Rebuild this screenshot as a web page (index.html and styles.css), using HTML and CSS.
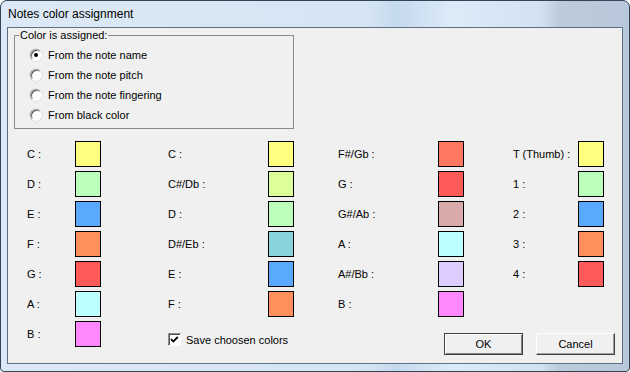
FILE: index.html
```html
<!DOCTYPE html>
<html lang="en">
<head>
    <meta charset="UTF-8">
    <title>Notes color assignment</title>
    <link rel="stylesheet" href="styles.css">
</head>
<body>
    <div class="window">
        <div class="titlebar">Notes color assignment</div>
        <div class="client">
            <fieldset class="group">
                <legend>Color is assigned:</legend>
                <div class="radio-row"><span class="radio"><span class="dot"></span></span>From the note name</div>
                <div class="radio-row"><span class="radio"></span>From the note pitch</div>
                <div class="radio-row"><span class="radio"></span>From the note fingering</div>
                <div class="radio-row"><span class="radio"></span>From black color</div>
            </fieldset>

            <div class="notes">
                <div class="col col1">
                    <div class="note"><span class="lbl">C :</span><span class="swatch yellow"></span></div>
                    <div class="note"><span class="lbl">D :</span><span class="swatch green"></span></div>
                    <div class="note"><span class="lbl">E :</span><span class="swatch blue"></span></div>
                    <div class="note"><span class="lbl">F :</span><span class="swatch orange"></span></div>
                    <div class="note"><span class="lbl">G :</span><span class="swatch red"></span></div>
                    <div class="note"><span class="lbl">A :</span><span class="swatch cyan"></span></div>
                    <div class="note"><span class="lbl">B :</span><span class="swatch pink"></span></div>
                </div>
                <div class="col col2">
                    <div class="note"><span class="lbl">C :</span><span class="swatch yellow"></span></div>
                    <div class="note"><span class="lbl">C#/Db :</span><span class="swatch lime"></span></div>
                    <div class="note"><span class="lbl">D :</span><span class="swatch green"></span></div>
                    <div class="note"><span class="lbl">D#/Eb :</span><span class="swatch teal"></span></div>
                    <div class="note"><span class="lbl">E :</span><span class="swatch blue"></span></div>
                    <div class="note"><span class="lbl">F :</span><span class="swatch orange"></span></div>
                    <div class="check-row">
                        <span class="checkbox">
                            <svg width="11" height="11" viewBox="0 0 11 11"><polyline points="2,5 4.3,7.5 8.8,3" fill="none" stroke="#000" stroke-width="1.8"/></svg>
                        </span>
                        Save choosen colors
                    </div>
                </div>
                <div class="right">
                    <div class="cols34">
                        <div class="col col3">
                            <div class="note"><span class="lbl">F#/Gb :</span><span class="swatch salmon"></span></div>
                            <div class="note"><span class="lbl">G :</span><span class="swatch red"></span></div>
                            <div class="note"><span class="lbl">G#/Ab :</span><span class="swatch rose"></span></div>
                            <div class="note"><span class="lbl">A :</span><span class="swatch cyan"></span></div>
                            <div class="note"><span class="lbl">A#/Bb :</span><span class="swatch lilac"></span></div>
                            <div class="note"><span class="lbl">B :</span><span class="swatch pink"></span></div>
                        </div>
                        <div class="col col4">
                            <div class="note"><span class="lbl">T (Thumb) :</span><span class="swatch yellow"></span></div>
                            <div class="note"><span class="lbl">1 :</span><span class="swatch green"></span></div>
                            <div class="note"><span class="lbl">2 :</span><span class="swatch blue"></span></div>
                            <div class="note"><span class="lbl">3 :</span><span class="swatch orange"></span></div>
                            <div class="note"><span class="lbl">4 :</span><span class="swatch red"></span></div>
                        </div>
                    </div>
                    <div class="buttons">
                        <button class="btn default">OK</button>
                        <button class="btn">Cancel</button>
                    </div>
                </div>
            </div>
        </div>
    </div>
</body>
</html>
```

FILE: styles.css
```css
html, body {
    margin: 0;
    padding: 0;
    background: #ffffff;
}
body {
    font-family: "Liberation Sans", Arial, sans-serif;
    font-size: 11px;
    color: #000;
}
.window {
    width: 630px;
    height: 372px;
    box-sizing: border-box;
    border: 1px solid #2e4656;
    border-radius: 7px 7px 4px 4px;
    padding: 0 6px 7px 6px;
    display: flex;
    flex-direction: column;
    background: linear-gradient(to right, #dce8f5 0%, #d6e5f4 58%, #c6daee 63%, #dcebf8 72%, #d2e2f2 86%, #bccbdc 89%, #b9c8da 100%);
}
.titlebar {
    height: 26px;
    line-height: 27px;
    padding-left: 1px;
    font-size: 12px;
    color: #000;
    white-space: nowrap;
}
.client {
    flex: 1;
    background: #f0f0f0;
    border: 1px solid #5d6e80;
    padding: 1px 7px 0 6px;
}

/* option group */
.group {
    width: 280px;
    height: 100px;
    box-sizing: border-box;
    margin: 0;
    padding: 3px 4px 2px 4px;
    border: 1px solid #8a8a8a;
}
.group legend {
    padding: 0 1px;
    line-height: 13px;
}
.radio-row {
    height: 20px;
    display: flex;
    align-items: center;
    margin-left: 11px;
}
.radio {
    width: 12px;
    height: 12px;
    box-sizing: border-box;
    border-radius: 50%;
    background: #fff;
    border: 1px solid;
    border-color: #a0a0a0 #ffffff #ffffff #a0a0a0;
    box-shadow: inset 1px 1px 0 #606060, 0 0 0 0.5px #c8c8c8;
    margin-right: 6px;
    display: flex;
    align-items: center;
    justify-content: center;
}
.dot {
    width: 4px;
    height: 4px;
    border-radius: 50%;
    background: #000;
}

/* note colors */
.notes {
    display: flex;
    margin-top: 10px;
    padding-left: 13px;
}
.note {
    height: 30px;
    display: flex;
    align-items: center;
}
.lbl {
    white-space: nowrap;
}
.col1 .lbl { width: 48px; }
.col2 { margin-left: 67px; }
.col2 .lbl, .col3 .lbl { width: 100px; }
.col4 { margin-left: 49px; }
.col4 .lbl { width: 65px; }
.right {
    flex: 1;
    margin-left: 44px;
    display: flex;
    flex-direction: column;
}
.cols34 {
    display: flex;
}
.swatch {
    width: 26px;
    height: 26px;
    box-sizing: border-box;
    border: 1px solid #000;
}
.yellow { background: #ffff80; }
.green  { background: #bbffbb; }
.blue   { background: #5aa9ff; }
.orange { background: #ff905c; }
.red    { background: #ff5a5a; }
.cyan   { background: #bbffff; }
.pink   { background: #ff88ff; }
.lime   { background: #ddff99; }
.teal   { background: #88d4dd; }
.salmon { background: #ff7761; }
.rose   { background: #d9aaa9; }
.lilac  { background: #ddccff; }

.check-row {
    margin-top: 14px;
    height: 13px;
    display: flex;
    align-items: center;
}
.checkbox {
    width: 13px;
    height: 13px;
    box-sizing: border-box;
    background: #fff;
    border: 1px solid;
    border-color: #8c8c8c #ffffff #ffffff #8c8c8c;
    box-shadow: inset 1px 1px 0 #505050;
    margin-right: 5px;
    display: flex;
    align-items: center;
    justify-content: center;
}

.buttons {
    margin-top: 14px;
    display: flex;
    justify-content: flex-end;
    gap: 13px;
}
.btn {
    width: 79px;
    height: 22px;
    box-sizing: border-box;
    font-family: "Liberation Sans", Arial, sans-serif;
    font-size: 11px;
    color: #000;
    background: #f0f0f0;
    border: 1px solid;
    border-color: #ffffff #404040 #404040 #ffffff;
    box-shadow: inset -1px -1px 0 #a0a0a0;
    padding: 0;
}
.btn.default {
    border-color: #404040;
    box-shadow: inset 1px 1px 0 #ffffff, inset -1px -1px 0 #808080;
}
```
